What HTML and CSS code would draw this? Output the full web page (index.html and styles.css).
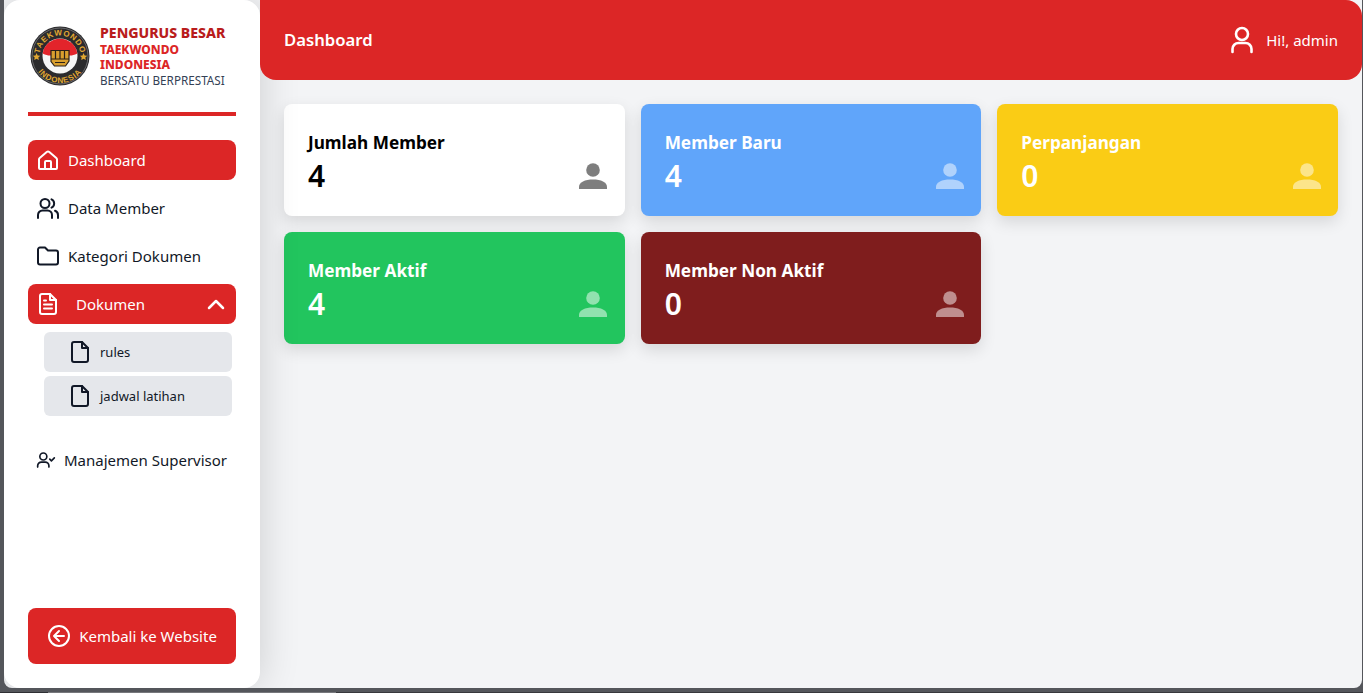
FILE: index.html
```html
<!DOCTYPE html>
<html lang="id">
<head>
<meta charset="utf-8">
<title>Dashboard</title>
<link rel="stylesheet" href="styles.css">
</head>
<body>
<div class="app">
  <aside class="sidebar">
    <div class="brand">
      <svg class="logo" viewBox="0 0 60 60">
        <defs>
          <path id="arcTop" d="M9.500 30a20.500 20.500 0 0 1 41 0"/>
          <path id="arcBottom" d="M3 30a27 27 0 0 0 54 0"/>
        </defs>
        <circle cx="30" cy="30" r="29.500" fill="#2b2b2d"/>
        <circle cx="30" cy="30" r="28" fill="none" stroke="#77777a" stroke-width=".8"/>
        <circle cx="30" cy="30" r="17.500" fill="#f6f6f6"/>
        <path d="M12.700 27.500a17.500 17.500 0 0 1 34.600 0c-3 1.500-5 2-7.300 2H20c-2.300 0-4.300-.5-7.300-2z" fill="#e3242b"/>
        <text class="ring-text"><textPath href="#arcTop" startOffset="50%" text-anchor="middle">TAEKWONDO</textPath></text>
        <text class="ring-text"><textPath href="#arcBottom" startOffset="50%" text-anchor="middle">INDONESIA</textPath></text>
        <path d="M21 24.500h18v10.500l-3.500 5h-11l-3.500-4.500z" fill="#d99f2e"/>
        <path d="M21 24.500h18v10.500l-3.500 5h-11l-3.500-4.500zM25.500 24.500v8.500M30 24.500v8.500M34.500 24.500v8.500M21 33h18M25 36.500h10" fill="none" stroke="#2a2118" stroke-width="1.200"/>
        <path d="M6.500 27l1.200 2.500 2.600.3-2 1.700.6 2.500-2.400-1.300-2.300 1.300.5-2.500-1.800-1.700 2.600-.3zM53.500 27l1.200 2.500 2.600.3-2 1.700.6 2.500-2.400-1.300-2.300 1.300.5-2.500-1.800-1.700 2.600-.3z" fill="#e2a832"/>
      </svg>
      <div class="brand-text">
        <div class="brand-title">PENGURUS BESAR</div>
        <div class="brand-sub">TAEKWONDO INDONESIA</div>
        <div class="brand-tag">BERSATU BERPRESTASI</div>
      </div>
    </div>
    <div class="divider"></div>
    <nav class="nav">
      <a class="item active">
        <svg class="ic" viewBox="0 0 24 24"><path d="M4 21a1 1 0 0 1-1-1v-8.500a2 2 0 0 1 .7-1.500l7-6a2 2 0 0 1 2.600 0l7 6a2 2 0 0 1 .7 1.500V20a1 1 0 0 1-1 1z"/><path d="M9 21v-7a1 1 0 0 1 1-1h4a1 1 0 0 1 1 1v7"/></svg>
        <span>Dashboard</span>
      </a>
      <a class="item">
        <svg class="ic" viewBox="0 0 24 24"><circle cx="9" cy="7.500" r="4.500"/><path d="M2 22v-3a4.500 4.500 0 0 1 4.500-4.500h5A4.500 4.500 0 0 1 16 19v3"/><path d="M15.500 3.400a4.500 4.500 0 0 1 0 8.200"/><path d="M19 14.800a4.500 4.500 0 0 1 3 4.200v3"/></svg>
        <span>Data Member</span>
      </a>
      <a class="item">
        <svg class="ic" viewBox="0 0 24 24"><path d="M2 5.500a2 2 0 0 1 2-2h5l3 3h8a2 2 0 0 1 2 2v10a2 2 0 0 1-2 2H4a2 2 0 0 1-2-2z"/></svg>
        <span>Kategori Dokumen</span>
      </a>
      <a class="item active split">
        <svg class="ic" viewBox="0 0 24 24"><path d="M14 2H6a2 2 0 0 0-2 2v16a2 2 0 0 0 2 2h12a2 2 0 0 0 2-2V8z"/><path d="M14 2v6h6M8 12.500h8M8 16.500h8M8 8.500h2"/></svg>
        <span class="grow">Dokumen</span>
        <svg class="chev" viewBox="0 0 24 24"><path d="m5 16 7-7 7 7"/></svg>
      </a>
      <div class="subnav">
        <a class="subitem">
          <svg class="ic" viewBox="0 0 24 24"><path d="M14 2H6a2 2 0 0 0-2 2v16a2 2 0 0 0 2 2h12a2 2 0 0 0 2-2V8z"/><path d="M14 2v6h6"/></svg>
          <span>rules</span>
        </a>
        <a class="subitem">
          <svg class="ic" viewBox="0 0 24 24"><path d="M14 2H6a2 2 0 0 0-2 2v16a2 2 0 0 0 2 2h12a2 2 0 0 0 2-2V8z"/><path d="M14 2v6h6"/></svg>
          <span>jadwal latihan</span>
        </a>
      </div>
      <a class="item supervisor">
        <svg class="ic-small" viewBox="0 0 24 24"><circle cx="8.800" cy="7.800" r="4.200"/><path d="M2 20.500v-1.500a4.500 4.500 0 0 1 4.500-4.500h4.500A4.500 4.500 0 0 1 15.500 19v1.500"/><path d="m16.500 11 2 2 3.500-3.500"/></svg>
        <span>Manajemen Supervisor</span>
      </a>
    </nav>
    <a class="back">
      <svg class="ic" viewBox="0 0 24 24"><circle cx="12" cy="12" r="10"/><path d="m12 7-5 5 5 5M7 12h10"/></svg>
      <span>Kembali ke Website</span>
    </a>
  </aside>
  <main class="main">
    <header class="topbar">
      <div class="page-title">Dashboard</div>
      <div class="user">
        <svg class="user-ic" viewBox="0 0 24 28"><circle cx="12" cy="8" r="6"/><path d="M2.500 26v-3a6 6 0 0 1 6-6h7a6 6 0 0 1 6 6v3"/></svg>
        <span>Hi!, admin</span>
      </div>
    </header>
    <section class="cards">
      <div class="card white"><div class="card-text"><div class="label">Jumlah Member</div><div class="value">4</div></div><svg class="person" viewBox="0 0 28 26"><circle cx="14" cy="7" r="6.800"/><path d="M0 26v-2c0-5 6-7.500 14-7.500S28 19 28 24v2z"/></svg></div>
      <div class="card blue"><div class="card-text"><div class="label">Member Baru</div><div class="value">4</div></div><svg class="person" viewBox="0 0 28 26"><circle cx="14" cy="7" r="6.800"/><path d="M0 26v-2c0-5 6-7.500 14-7.500S28 19 28 24v2z"/></svg></div>
      <div class="card yellow"><div class="card-text"><div class="label">Perpanjangan</div><div class="value">0</div></div><svg class="person" viewBox="0 0 28 26"><circle cx="14" cy="7" r="6.800"/><path d="M0 26v-2c0-5 6-7.500 14-7.500S28 19 28 24v2z"/></svg></div>
      <div class="card green"><div class="card-text"><div class="label">Member Aktif</div><div class="value">4</div></div><svg class="person" viewBox="0 0 28 26"><circle cx="14" cy="7" r="6.800"/><path d="M0 26v-2c0-5 6-7.500 14-7.500S28 19 28 24v2z"/></svg></div>
      <div class="card maroon"><div class="card-text"><div class="label">Member Non Aktif</div><div class="value">0</div></div><svg class="person" viewBox="0 0 28 26"><circle cx="14" cy="7" r="6.800"/><path d="M0 26v-2c0-5 6-7.500 14-7.500S28 19 28 24v2z"/></svg></div>
    </section>
  </main>
</div>
<div class="edge">
  <div class="edge-dark"></div>
  <div class="edge-light"></div>
  <div class="edge-rest"></div>
</div>
</body>
</html>
```
FILE: styles.css
```css
* { box-sizing: border-box; }
html, body { margin: 0; height: 100%; }
body {
  background: #54565b;
  font-family: "Noto Sans", "Open Sans", sans-serif;
  overflow: hidden;
  height: 693px;
}
.app {
  display: flex;
  height: 688px;
  margin: 0 1px 4px 4px;
  background: #f3f4f6;
  border-radius: 0 0 8px 8px;
  overflow: hidden;
}
.edge { display: flex; height: 1px; }
.edge-dark { width: 48px; background: #2e2f33; }
.edge-light { width: 288px; background: #77787c; }
.edge-rest { flex: 1; background: #37383c; }
.sidebar {
  width: 256px;
  flex: none;
  background: #fff;
  border-radius: 16px;
  padding: 24px;
  display: flex;
  flex-direction: column;
  box-shadow: 0 0 40px rgba(0,0,0,.16);
  position: relative;
  z-index: 1;
}
.brand { display: flex; align-items: center; gap: 10px; padding-left: 2px; height: 64px; }
.logo { width: 60px; height: 60px; flex: none; }
.ring-text { font-family: "Liberation Sans", sans-serif; font-size: 8px; font-weight: 700; letter-spacing: .7px; fill: #e2a832; }
.brand-text { line-height: 15px; font-size: 12px; }
.brand-title { font-weight: 800; font-size: 14.100px; color: #b91c1c; line-height: 15px; margin-bottom: 2px; white-space: nowrap; }
.brand-sub { font-weight: 800; color: #dc2626; font-size: 12px; }
.brand-tag { color: #334155; font-size: 11.700px; white-space: nowrap; margin-top: 1px; }
.divider { height: 4px; background: #dc2626; margin-top: 24px; }
.nav { display: flex; flex-direction: column; gap: 8px; margin-top: 24px; flex: 1; }
.item {
  display: flex; align-items: center; gap: 8px;
  height: 40px; padding: 0 8px;
  border-radius: 8px; color: #111827; font-size: 15px;
  white-space: nowrap;
}
.item.active { background: #dc2626; color: #fff; }
.item.split { gap: 16px; }
.grow { flex: 1; }
.ic, .ic-small, .chev, .user-ic { fill: none; stroke: currentColor; stroke-width: 2; stroke-linecap: round; stroke-linejoin: round; flex: none; }
.ic { width: 24px; height: 24px; }
.ic-small { width: 20px; height: 20px; }
.chev { width: 24px; height: 24px; stroke-width: 2.500; }
.subnav { display: flex; flex-direction: column; gap: 4px; padding: 0 4px 0 16px; }
.subitem {
  display: flex; align-items: center; gap: 8px;
  height: 40px; padding: 0 24px;
  background: #e5e7eb; border-radius: 6px;
  color: #111827; font-size: 13px;
}
.supervisor { margin-top: 16px; }
.back {
  display: flex; align-items: center; justify-content: center; gap: 8px;
  height: 56px; background: #dc2626; color: #fff;
  border-radius: 8px; font-size: 15px; white-space: nowrap;
}
.main { flex: 1; min-width: 0; }
.topbar {
  height: 80px; background: #dc2626; color: #fff;
  border-radius: 0 16px 16px 16px;
  display: flex; align-items: center; justify-content: space-between;
  padding: 0 24px;
  position: relative;
  z-index: 2;
}
.page-title { font-size: 16.700px; font-weight: 600; margin-bottom: 2px; }
.user { display: flex; align-items: center; gap: 12px; font-size: 15px; }
.user-ic { width: 24px; height: 28px; stroke-width: 2.600; }
.cards {
  display: grid; grid-template-columns: repeat(3, 1fr); gap: 16px;
  padding: 24px;
}
.card {
  height: 112px; border-radius: 8px; padding: 25px 17.300px 24px 24px;
  display: flex; justify-content: space-between;
  color: #fff;
  box-shadow: 0 6px 16px rgba(0,0,0,.12);
}
.label { font-size: 17.200px; font-weight: 700; line-height: 28px; }
.value { font-size: 30px; font-weight: 600; line-height: 36px; margin-top: 1px; }
.person { width: 28px; height: 26px; fill: currentColor; opacity: .5; margin-bottom: 3px; align-self: flex-end; }
.white { background: #fff; color: #000; }
.blue { background: #60a5fa; }
.yellow { background: #facc15; }
.green { background: #22c55e; }
.maroon { background: #7f1d1d; }
```
